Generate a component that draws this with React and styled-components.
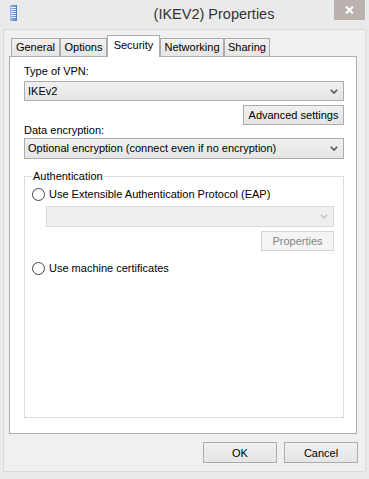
import React from "react";
import styled, { createGlobalStyle } from "styled-components";

const GlobalStyle = createGlobalStyle`
  body {
    margin: 0;
    background: #eaeaea;
    font-family: "Liberation Sans", Arial, sans-serif;
    font-size: 11px;
    color: #000;
  }
`;

const Window = styled.div`
  width: 369px;
  height: 479px;
  display: flex;
  flex-direction: column;
  background: #eaeaea;
  box-sizing: border-box;
  padding-bottom: 7px;
`;

const TitleBar = styled.div`
  height: 29px;
  display: flex;
  align-items: flex-start;
  flex-shrink: 0;
`;

const AppIcon = styled.svg`
  margin: 5px 0 0 10px;
  flex-shrink: 0;
`;

const TitleText = styled.div`
  flex: 1;
  padding: 5px 0 0 77px;
  text-align: center;
  font-size: 14.5px;
  line-height: 18px;
  color: #333;
`;

const CloseButton = styled.div`
  width: 31px;
  height: 20px;
  margin-right: 4px;
  background: #bab2af;
  display: flex;
  align-items: center;
  justify-content: center;
`;

const Client = styled.div`
  flex: 1;
  margin: 0 3px;
  border: 1px solid #dadada;
  background: #f0f0f0;
  padding: 5px 7px 8px 5px;
  display: flex;
  flex-direction: column;
`;

const TabRow = styled.div`
  display: flex;
  align-items: flex-end;
  height: 21px;
  padding-left: 2px;
`;

const Tab = styled.div`
  width: ${(p) => p.$w}px;
  box-sizing: border-box;
  height: ${(p) => (p.$active ? 22 : 18)}px;
  margin-bottom: ${(p) => (p.$active ? -1 : 0)}px;
  border: 1px solid #acacac;
  border-bottom: none;
  background: ${(p) =>
    p.$active ? "#fff" : "linear-gradient(#f0f0f0, #e5e5e5)"};
  position: relative;
  z-index: ${(p) => (p.$active ? 1 : 0)};
  text-align: center;
  line-height: ${(p) => (p.$active ? 18 : 17)}px;
`;

const Panel = styled.div`
  flex: 1;
  margin-right: 1px;
  background: #fff;
  border: 1px solid #adadad;
  padding: 7px 12px 15px 14px;
  display: flex;
  flex-direction: column;
`;

const Label = styled.div`
  line-height: 15px;
  margin-top: ${(p) => p.$mt || 0}px;
`;

const Select = styled.div`
  height: ${(p) => p.$h || 20}px;
  box-sizing: border-box;
  margin-top: ${(p) => p.$mt || 0}px;
  margin-left: ${(p) => p.$ml || 0}px;
  border: 1px solid ${(p) => (p.$disabled ? "#d9d9d9" : "#acacac")};
  background: ${(p) =>
    p.$disabled ? "#efefef" : "linear-gradient(#f0f0f0, #e5e5e5)"};
  display: flex;
  align-items: center;
  padding: 0 5px 0 3px;
  line-height: 15px;
`;

const SelectText = styled.span`
  flex: 1;
`;

const Button = styled.div`
  align-self: flex-end;
  width: ${(p) => p.$w}px;
  height: 20px;
  box-sizing: border-box;
  margin-top: ${(p) => p.$mt || 0}px;
  border: 1px solid ${(p) => (p.$disabled ? "#d5d5d5" : "#acacac")};
  background: ${(p) =>
    p.$disabled ? "#f4f4f4" : "linear-gradient(#f0f0f0, #e5e5e5)"};
  color: ${(p) => (p.$disabled ? "#838383" : "#000")};
  display: flex;
  align-items: center;
  justify-content: center;
`;

const Group = styled.fieldset`
  flex: 1;
  margin: 10px 0 0 0;
  border: 1px solid #dcdcdc;
  padding: 0 9px 0 7px;
  display: flex;
  flex-direction: column;
  min-width: 0;
`;

const Legend = styled.legend`
  padding: 0 1px;
  line-height: 14px;
`;

const RadioRow = styled.div`
  display: flex;
  align-items: center;
  gap: 4px;
  line-height: 15px;
  margin-top: ${(p) => p.$mt || 0}px;
`;

const RadioDot = styled.span`
  width: 13px;
  height: 13px;
  box-sizing: border-box;
  border-radius: 50%;
  border: 1px solid #444;
  background: #fff;
  flex-shrink: 0;
`;

const Footer = styled.div`
  display: flex;
  justify-content: flex-end;
  gap: 7px;
  margin-top: 8px;
`;

const DialogButton = styled.div`
  width: 74px;
  height: 21px;
  box-sizing: border-box;
  border: 1px solid #acacac;
  background: linear-gradient(#f0f0f0, #e5e5e5);
  display: flex;
  align-items: center;
  justify-content: center;
`;

const Chevron = ({ color = "#555" }) => (
  <svg width="8" height="5" viewBox="0 0 8 5">
    <path d="M0.8 0.8 L4 4 L7.2 0.8" fill="none" stroke={color} strokeWidth="1.6" />
  </svg>
);

const tabs = [
  { name: "General", w: 49 },
  { name: "Options", w: 47 },
  { name: "Security", w: 53, active: true },
  { name: "Networking", w: 64 },
  { name: "Sharing", w: 46 },
];

export default function App() {
  return (
    <>
      <GlobalStyle />
      <Window>
        <TitleBar>
          <AppIcon width="7" height="16" viewBox="0 0 7 16">
            <defs>
              <linearGradient id="ic" x1="0" x2="1">
                <stop offset="0" stopColor="#9bbbe0" />
                <stop offset="1" stopColor="#4a7dbd" />
              </linearGradient>
            </defs>
            <rect x="0" y="0" width="7" height="16" fill="url(#ic)" />
            {[2, 4, 6, 8, 10, 12].map((y) => (
              <rect key={y} x="1" y={y} width="5" height="1" fill="#e8f0fa" />
            ))}
          </AppIcon>
          <TitleText>(IKEV2) Properties</TitleText>
          <CloseButton>
            <svg width="9" height="8" viewBox="0 0 9 8">
              <path d="M1 0.5 L8 7.5 M8 0.5 L1 7.5" stroke="#fff" strokeWidth="2" />
            </svg>
          </CloseButton>
        </TitleBar>
        <Client>
          <TabRow>
            {tabs.map((t) => (
              <Tab key={t.name} $w={t.w} $active={t.active}>
                {t.name}
              </Tab>
            ))}
          </TabRow>
          <Panel>
            <Label>Type of VPN:</Label>
            <Select $mt={2}>
              <SelectText>IKEv2</SelectText>
              <Chevron />
            </Select>
            <Button $w={101} $mt={4}>Advanced settings</Button>
            <Label $mt={-2}>Data encryption:</Label>
            <Select $h={21}>
              <SelectText>Optional encryption (connect even if no encryption)</SelectText>
              <Chevron />
            </Select>
            <Group>
              <Legend>Authentication</Legend>
              <RadioRow $mt={4}>
                <RadioDot />
                Use Extensible Authentication Protocol (EAP)
              </RadioRow>
              <Select $h={21} $mt={4} $ml={14} $disabled>
                <SelectText />
                <Chevron color="#c4c4c4" />
              </Select>
              <Button $w={73} $mt={4} $disabled>Properties</Button>
              <RadioRow $mt={10}>
                <RadioDot />
                Use machine certificates
              </RadioRow>
            </Group>
          </Panel>
          <Footer>
            <DialogButton>OK</DialogButton>
            <DialogButton>Cancel</DialogButton>
          </Footer>
        </Client>
      </Window>
    </>
  );
}
